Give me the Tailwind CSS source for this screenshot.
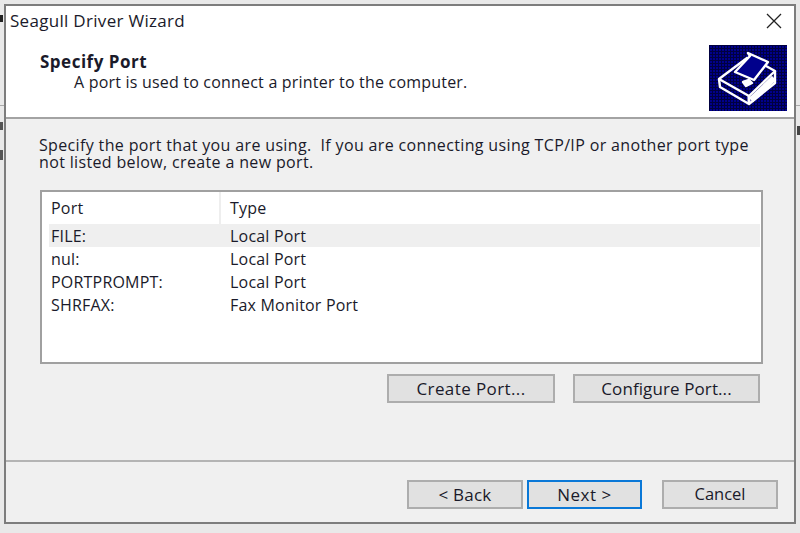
<!DOCTYPE html>
<html lang="en">
<head>
    <meta charset="UTF-8">
    <title>Seagull Driver Wizard</title>
    <script src="https://cdn.jsdelivr.net/npm/@tailwindcss/browser@4"></script>
</head>
<body class="relative w-[800px] h-[533px] overflow-hidden bg-[#e9e9e9] font-['Open_Sans','Noto_Sans',sans-serif] text-[#1a1a2a]">
    <!-- Bits of the desktop behind the dialog -->
    <div class="absolute left-0 top-[15px] w-[3px] h-[7px] bg-[#222]"></div>
    <div class="absolute left-0 top-[105px] w-[4px] h-[1px] bg-[#aaa]"></div>
    <div class="absolute left-0 top-[122px] w-[3px] h-[8px] bg-[#555]"></div>
    <div class="absolute left-0 top-[150px] w-[3px] h-[10px] bg-[#555]"></div>
    <div class="absolute right-0 top-[105px] w-[4px] h-[1px] bg-[#aaa]"></div>
    <div class="absolute right-0 top-[126px] w-[3px] h-[9px] bg-[#444]"></div>

    <div class="relative ml-[4px] mt-[4px] w-[792px] h-[520px] border-2 border-[#7d7d7d] bg-[#f0f0f0] flex flex-col">
        <!-- Title bar -->
        <div class="h-[30px] bg-white flex items-center justify-between pl-[4px] pr-[12px] text-[17px] tracking-[0.3px]">
            <span>Seagull Driver Wizard</span>
            <svg width="16" height="16" viewBox="0 0 16 16" fill="none" stroke="#222" stroke-width="1.3"><path d="M1 1L15 15M15 1L1 15"/></svg>
        </div>

        <!-- Header -->
        <div class="h-[83px] bg-white border-b-2 border-[#a3a3a3] flex justify-between pl-[34px] pr-[7px]">
            <div class="leading-[21px] pt-[15px]">
                <div class="font-bold text-[17px] tracking-[0.5px]">Specify Port</div>
                <div class="pl-[34px] text-[16px] tracking-[0.2px]">A port is used to connect a printer to the computer.</div>
            </div>
            <svg class="mt-[9px]" width="78" height="66" viewBox="0 0 78 66">
                <defs>
                    <pattern id="dither" width="3" height="3" patternUnits="userSpaceOnUse">
                        <rect width="3" height="3" fill="#00008c"/>
                        <path d="M0 .5H3M.5 0V3" stroke="#000040" stroke-width="1"/>
                    </pattern>
                </defs>
                <rect width="78" height="66" fill="url(#dither)"/>
                <g fill="none" stroke="#fff" stroke-width="2.4" stroke-linejoin="round">
                    <path d="M10 34L38 13L57 21L66 26L40 51Z"/>
                    <path d="M10 34L11 42L40 59L66 38V26"/>
                    <path d="M40 51V59" stroke-width="3"/>
                    <path d="M26 27L41 11L39 8L59 17L45 35Z" fill="#00008c"/>
                    <path d="M34 37L40 35L43 38L37 41Z" fill="#fff"/>
                    <path d="M42 55L65 33" stroke-width="6"/>
                </g>
            </svg>
        </div>

        <!-- Body -->
        <div class="flex-1 pl-[33px] pt-[18px]">
            <p class="text-[16px] leading-[17px] tracking-[0.35px] whitespace-nowrap">Specify the port that you are using.&nbsp; If you are connecting using TCP/IP or another port type<br>not listed below, create a new port.</p>

            <div class="mt-[19px] ml-[1px] w-[723px] h-[174px] border-2 border-[#a0a0a0] bg-white pl-[7px] pr-[1px] text-[16px] tracking-[0.2px]">
                <div class="h-[32px] flex items-center">
                    <div class="w-[172px] h-full flex items-center pl-[2px] border-r-2 border-[#eeeeee]">Port</div>
                    <div class="pl-[9px]">Type</div>
                </div>
                <div class="h-[23px] bg-[#efefef] flex items-center pl-[2px]">
                    <span class="w-[179px]">FILE:</span><span>Local Port</span>
                </div>
                <div class="h-[23px] flex items-center pl-[2px]">
                    <span class="w-[179px]">nul:</span><span>Local Port</span>
                </div>
                <div class="h-[23px] flex items-center pl-[2px]">
                    <span class="w-[179px]">PORTPROMPT:</span><span>Local Port</span>
                </div>
                <div class="h-[23px] flex items-center pl-[2px]">
                    <span class="w-[179px]">SHRFAX:</span><span>Fax Monitor Port</span>
                </div>
            </div>

            <div class="mt-[10px] w-[721px] flex justify-end gap-[18px] text-[17px]">
                <button class="w-[168px] h-[29px] bg-[#e1e1e1] border-2 border-[#adadad] tracking-[0.4px]">Create Port...</button>
                <button class="w-[187px] h-[29px] bg-[#e1e1e1] border-2 border-[#adadad] tracking-[0.1px]">Configure Port...</button>
            </div>
        </div>

        <!-- Footer -->
        <div class="h-[62px] border-t-2 border-[#b4b4b4] flex justify-end gap-[20px] pr-[16px] pt-[18px] text-[17px]">
            <div class="flex gap-[4px]">
                <button class="w-[116px] h-[29px] bg-[#e1e1e1] border-2 border-[#adadad] tracking-[0.2px]">&lt; Back</button>
                <button class="w-[115px] h-[29px] bg-[#e1e1e1] border-2 border-[#0a78d7] tracking-[0.5px]">Next &gt;</button>
            </div>
            <button class="w-[116px] h-[29px] bg-[#e1e1e1] border-2 border-[#adadad] text-[16.5px]">Cancel</button>
        </div>
    </div>
</body>
</html>
